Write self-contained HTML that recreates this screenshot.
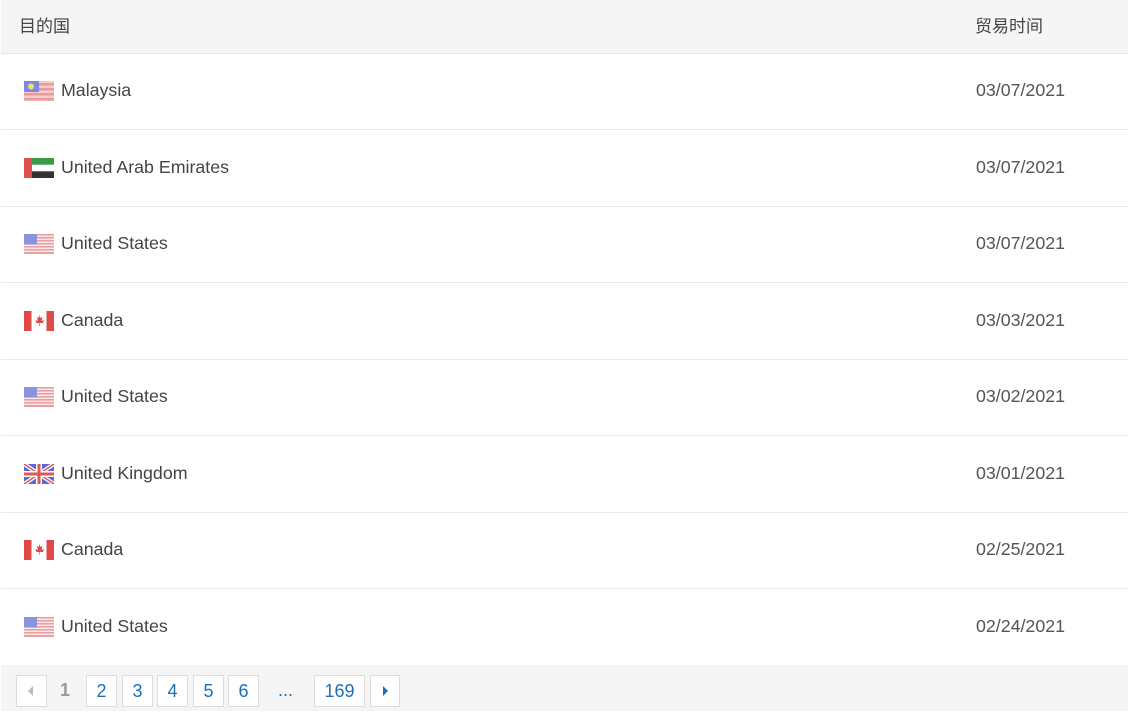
<!DOCTYPE html>
<html><head><meta charset="utf-8"><style>
body{margin:0;width:1128px;height:711px;overflow:hidden;background:#fff;font-family:"Liberation Sans","Noto Sans CJK SC",sans-serif;color:#333}
.hd{position:absolute;left:1px;top:0;width:1127px;height:53px;background:#f5f5f5;border-bottom:1px solid #e8e8e8;font-size:17px;color:#444}
.hd span{position:absolute;top:12px}
.row{position:absolute;left:1px;width:1127px;border-bottom:1px solid #ebebeb;height:76px}
.row svg{position:absolute;left:23px;top:28px}
.row .n{position:absolute;left:60px;top:27px;font-size:17.8px;color:#444}
.row .d{position:absolute;left:975px;top:27px;font-size:17.8px;color:#555}
.pg{position:absolute;left:1px;top:665px;width:1127px;height:46px;background:#f5f5f5}
.b{position:absolute;top:10px;height:30px;border:1px solid #ddd;background:#fff;color:#1a6fb8;font-size:18px;text-align:center;line-height:30px;box-sizing:content-box}
</style></head><body>
<div class="hd"><span style="left:18px">目的国</span><span style="left:974px">贸易时间</span></div>
<svg width="0" height="0" style="position:absolute"><defs>
<g id="my"><rect width="30" height="20" fill="#f6cccc"/><g fill="#ea9a9a"><rect y="2" width="30" height="2.5"/><rect y="7" width="30" height="2.5"/><rect y="12" width="30" height="2.5"/><rect y="17" width="30" height="2.5"/></g><rect width="15" height="11" fill="#7a8ade"/><circle cx="7" cy="5.5" r="3" fill="#f0e070"/></g>
<g id="ae"><rect width="30" height="20" fill="#fff"/><rect width="30" height="6.7" fill="#3a9a4a"/><rect y="13.3" width="30" height="6.7" fill="#333"/><rect width="8" height="20" fill="#e05050"/></g>
<g id="us"><rect width="30" height="20" fill="#fbeaea"/><g fill="#eaa0a0"><rect y="0" width="30" height="1.6"/><rect y="3" width="30" height="1.6"/><rect y="6" width="30" height="1.6"/><rect y="9" width="30" height="1.6"/><rect y="12" width="30" height="1.6"/><rect y="15" width="30" height="1.6"/><rect y="18" width="30" height="2"/></g><rect width="13" height="10.5" fill="#8a94dc"/></g>
<g id="ca"><rect width="30" height="20" fill="#fff"/><rect width="7.5" height="20" fill="#e04848"/><rect x="22.5" width="7.5" height="20" fill="#e04848"/><path d="M15 4l1.5 3 2-1-1 4 2.5-1-1 3h-3v3h-0.6v-3h-3l-1-3 2.5 1-1-4 2 1z" fill="#e04848"/></g>
<g id="gb"><rect width="30" height="20" fill="#5a6ad0"/><path d="M0 0L30 20M30 0L0 20" stroke="#fff" stroke-width="4"/><path d="M0 0L30 20M30 0L0 20" stroke="#e05858" stroke-width="1.5"/><rect x="12" width="6" height="20" fill="#fff"/><rect y="7" width="30" height="6" fill="#fff"/><rect x="13.5" width="3" height="20" fill="#e05858"/><rect y="8.5" width="30" height="3" fill="#e05858"/></g>
</defs></svg>
<div class="row" style="top:53px"><svg width="31" height="20"><use href="#my"/></svg><span class="n">Malaysia</span><span class="d">03/07/2021</span></div>
<div class="row" style="top:130px"><svg width="31" height="20"><use href="#ae"/></svg><span class="n">United Arab Emirates</span><span class="d">03/07/2021</span></div>
<div class="row" style="top:206px"><svg width="31" height="20"><use href="#us"/></svg><span class="n">United States</span><span class="d">03/07/2021</span></div>
<div class="row" style="top:283px"><svg width="31" height="20"><use href="#ca"/></svg><span class="n">Canada</span><span class="d">03/03/2021</span></div>
<div class="row" style="top:359px"><svg width="31" height="20"><use href="#us"/></svg><span class="n">United States</span><span class="d">03/02/2021</span></div>
<div class="row" style="top:436px"><svg width="31" height="20"><use href="#gb"/></svg><span class="n">United Kingdom</span><span class="d">03/01/2021</span></div>
<div class="row" style="top:512px"><svg width="31" height="20"><use href="#ca"/></svg><span class="n">Canada</span><span class="d">02/25/2021</span></div>
<div class="row" style="top:589px;border-bottom:none"><svg width="31" height="20"><use href="#us"/></svg><span class="n">United States</span><span class="d">02/24/2021</span></div>
<div class="pg">
<div class="b" style="left:15px;width:29px"><svg width="29" height="30"><path d="M16 10l-5 5 5 5z" fill="#bbb"/></svg></div>
<div style="position:absolute;left:59px;top:10px;line-height:30px;font-size:18px;font-weight:bold;color:#999">1</div>
<div class="b" style="left:85px;width:29px">2</div>
<div class="b" style="left:121px;width:29px">3</div>
<div class="b" style="left:156px;width:29px">4</div>
<div class="b" style="left:192px;width:29px">5</div>
<div class="b" style="left:227px;width:29px">6</div>
<div style="position:absolute;left:277px;top:10px;line-height:30px;font-size:18px;color:#1a6fb8">...</div>
<div class="b" style="left:313px;width:49px">169</div>
<div class="b" style="left:369px;width:28px"><svg width="28" height="30"><path d="M12 10l5 5-5 5z" fill="#1a6fb8"/></svg></div>
</div>
</body></html>
